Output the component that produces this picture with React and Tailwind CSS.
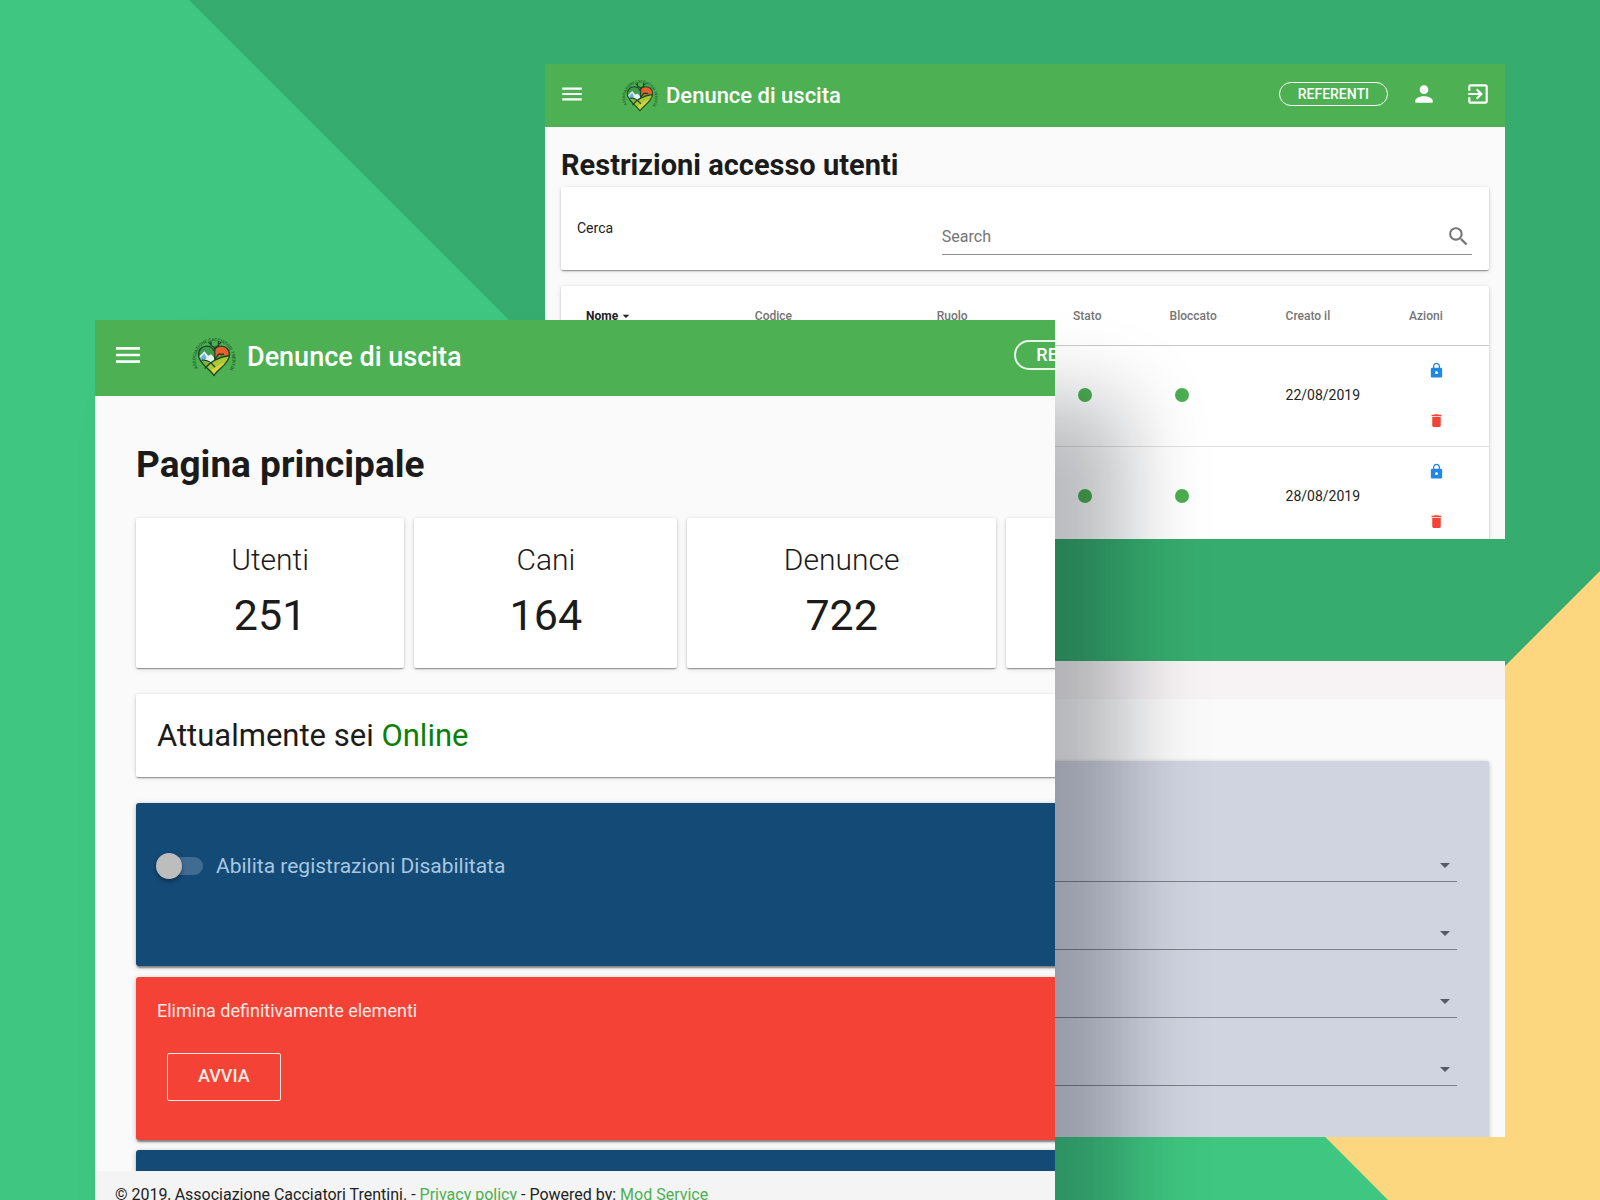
import React from "react";
import {
  MdArrowDropDown,
  MdDelete,
  MdExitToApp,
  MdLock,
  MdMenu,
  MdPerson,
  MdSearch,
} from "react-icons/md";

const CARD =
  "rounded-[2px] bg-white shadow-[0_2px_1px_-1px_rgba(0,0,0,0.25),0_1px_2px_rgba(0,0,0,0.2),0_1px_5px_rgba(0,0,0,0.12)]";
const PANEL =
  "rounded-[3px] shadow-[0_3px_2px_-1px_rgba(0,0,0,0.4),0_1px_5px_rgba(0,0,0,0.25)]";

function Backdrop() {
  return (
    <svg
      className="absolute inset-0 h-full w-full"
      viewBox="0 0 1600 1200"
      preserveAspectRatio="xMidYMid slice"
      aria-hidden="true"
    >
      <rect width="1600" height="1200" fill="#3fc680" />
      <polygon points="189,0 1600,0 1600,1200 1389,1200" fill="#36ad6e" />
      <polygon points="1180,991 1600,571 1600,1200 1388,1200" fill="#fcd77f" />
    </svg>
  );
}

function Logo({ id, className }) {
  return (
    <svg viewBox="0 0 60 60" className={className} role="img" aria-label="Associazione Cacciatori Trentini">
      <defs>
        <path id={`${id}-arc`} d="M8 48A25 25 0 1 1 52 48" />
        <clipPath id={`${id}-heart`}>
          <path d="M30 58C24 49 10 42 9 31C8 23 14 18 20 18C25 18 28 20 30 24C32 20 35 18 40 18C46 18 52 23 51 31C50 42 36 49 30 58Z" />
        </clipPath>
      </defs>
      <text fontSize="6" fontWeight="700" fill="#23662f" fontFamily="Roboto, sans-serif">
        <textPath href={`#${id}-arc`}>ASSOCIAZIONE CACCIATORI TRENTINI</textPath>
      </text>
      <g clipPath={`url(#${id}-heart)`}>
        <rect x="6" y="16" width="48" height="44" fill="#3f9a4c" />
        <path d="M32 18H54V34L42 30L32 34Z" fill="#e8602c" />
        <path d="M6 36L17 25L22 31L26 29L34 38L22 46Z" fill="#e6f2ee" />
        <path d="M10 35L17 28L20 34L16 38Z" fill="#6db4dc" />
        <path d="M6 38C14 34 22 38 30 46L24 56L6 50Z" fill="#7fb83c" />
        <path d="M18 48C26 36 40 30 54 31V60H24Z" fill="#a9c832" />
        <path d="M24 54C30 46 40 40 52 38V60H24Z" fill="#d6d43c" />
        <path d="M27 60C32 52 40 46 50 44V60Z" fill="#9cc038" />
      </g>
      <g fill="none" stroke="#1b4426" strokeWidth="1.8" strokeLinejoin="round" strokeLinecap="round">
        <path d="M30 58C24 49 10 42 9 31C8 23 14 18 20 18C25 18 28 20 30 24C32 20 35 18 40 18C46 18 52 23 51 31C50 42 36 49 30 58Z" />
        <path d="M14 37C22 36 27 41 31 46M18 48C26 38 36 33 50 31" />
        <path d="M31 36V20M31 20L26 17V12M31 20L36 17V12M26 16L23 13M36 16L39 13M31 36L36 29H43" />
      </g>
    </svg>
  );
}

function RestrictionsWindow() {
  const rows = ["22/08/2019", "28/08/2019"];
  const headings = ["Codice", "Ruolo", "Stato", "Bloccato", "Creato il", "Azioni"];
  return (
    <section className="absolute top-16 right-[95px] left-[545px] h-[475px] overflow-hidden bg-[#fafafa]">
      <header className="flex h-[63px] items-center bg-[#4db052] px-[14px] pb-1 text-white">
        <button type="button" aria-label="Menu" className="flex">
          <MdMenu size={26} />
        </button>
        <Logo id="back" className="ml-[37px] size-9" />
        <span className="ml-2 pt-1 text-[22px] leading-7 font-medium">Denunce di uscita</span>
        <button
          type="button"
          className="ml-auto h-6 rounded-full border border-white px-[18px] text-[14px] leading-5 font-medium"
        >
          REFERENTI
        </button>
        <button type="button" aria-label="Profilo" className="ml-[23px] flex">
          <MdPerson size={26} />
        </button>
        <button type="button" aria-label="Esci" className="ml-7 flex">
          <MdExitToApp size={26} />
        </button>
      </header>
      <main className="px-4">
        <h1 className="pt-5 pb-1 text-[29px] leading-9 font-bold text-[#1b1b1b]">Restrizioni accesso utenti</h1>
        <div className={`${CARD} mb-4 grid h-[83px] grid-cols-[364fr_530fr] px-4`}>
          <label htmlFor="search" className="pt-[31px] text-[14px] leading-5 text-[#222]">
            Cerca
          </label>
          <div className="mt-8 mr-px flex h-9 items-center border-b border-[#8d8d8d] pr-px">
            <input
              id="search"
              type="search"
              placeholder="Search"
              className="min-w-0 flex-1 bg-transparent text-[16px] leading-6 outline-none placeholder:text-[#757575]"
            />
            <MdSearch size={25} className="text-[#757575]" />
          </div>
        </div>
        <div className={CARD}>
          <table className="w-full table-fixed border-collapse text-left">
            <colgroup>
              <col className="w-[18.3%]" />
              <col className="w-[19.6%]" />
              <col className="w-[14.7%]" />
              <col className="w-[10.4%]" />
              <col className="w-[12.5%]" />
              <col className="w-[13.3%]" />
              <col className="w-[11.2%]" />
            </colgroup>
            <thead>
              <tr className="h-[59px] border-b border-[#c9c9c9] text-[12px] leading-4 text-[#757575]">
                <th scope="col" className="pt-[2px] pl-[25px] font-bold text-[#222]">
                  <span className="flex items-center">
                    Nome
                    <MdArrowDropDown size={16} />
                  </span>
                </th>
                {headings.map((h) => (
                  <th key={h} scope="col" className="pt-[2px] pl-6 font-medium">
                    {h}
                  </th>
                ))}
              </tr>
            </thead>
            <tbody>
              {rows.map((date) => (
                <tr key={date} className="border-b border-[#e0e0e0] text-[14px] leading-5 text-[#222]">
                  <td />
                  <td />
                  <td />
                  <td className="pb-[2px] pl-[29px]">
                    <span className="block size-[14px] rounded-full bg-[#4caf50]" />
                  </td>
                  <td className="pb-[2px] pl-[29px]">
                    <span className="block size-[14px] rounded-full bg-[#4caf50]" />
                  </td>
                  <td className="pb-[2px] pl-6">{date}</td>
                  <td className="pl-6">
                    <button type="button" aria-label="Blocca" className="flex h-[50px] w-[54px] items-center justify-center text-[#1e88e5]">
                      <MdLock size={17} />
                    </button>
                    <button type="button" aria-label="Elimina" className="flex h-[50px] w-[54px] items-center justify-center text-[#f44336]">
                      <MdDelete size={17} />
                    </button>
                  </td>
                </tr>
              ))}
            </tbody>
          </table>
        </div>
      </main>
    </section>
  );
}

function FormWindow() {
  return (
    <section className="absolute top-[661px] right-[95px] left-[545px] h-[476px] overflow-hidden bg-[#fafafa]">
      <div className="h-[38px] bg-[#f7f3f4]" />
      <form className="mx-4 mt-[62px] h-full rounded-[2px] bg-[#d0d4e0] px-8 pt-[53px] shadow-[0_1px_4px_rgba(0,0,0,0.25)]">
        {["Campo 1", "Campo 2", "Campo 3", "Campo 4"].map((name) => (
          <div key={name} className="grid h-[68px] items-end border-b border-[#7c808b]">
            <select
              aria-label={name}
              className="col-start-1 row-start-1 h-8 w-full appearance-none bg-transparent outline-none"
            />
            <MdArrowDropDown
              size={24}
              className="pointer-events-none col-start-1 row-start-1 mb-1 justify-self-end text-[#555a66]"
            />
          </div>
        ))}
      </form>
    </section>
  );
}

function Stat({ label, value }) {
  return (
    <div className={`${CARD} h-[150px] pt-[22px] text-center text-[#1b1b1b]`}>
      <div className="text-[30px] leading-10 font-light">{label}</div>
      <div className="pt-[7px] text-[43px] leading-[56px]">{value}</div>
    </div>
  );
}

function HomeWindow() {
  return (
    <section className="absolute top-80 right-[545px] -bottom-4 left-[95px] shadow-[70px_80px_76px_rgba(0,10,20,0.28)]">
      <div className="flex h-full flex-col overflow-hidden bg-[#fafafa]">
        <header className="flex h-[76px] w-[125%] shrink-0 items-center bg-[#4db052] px-[17px] pb-[6px] text-white">
          <button type="button" aria-label="Menu" className="flex">
            <MdMenu size={32} />
          </button>
          <Logo id="front" className="ml-12 size-11" />
          <span className="ml-[11px] pt-1 text-[27px] leading-8 font-medium">Denunce di uscita</span>
          <button
            type="button"
            className="ml-auto h-[30px] rounded-full border-2 border-[#e8f5e9] px-5 text-[18px] leading-6 font-medium"
          >
            REFERENTI
          </button>
          <button type="button" aria-label="Profilo" className="ml-7 flex">
            <MdPerson size={32} />
          </button>
          <button type="button" aria-label="Esci" className="ml-9 flex">
            <MdExitToApp size={32} />
          </button>
        </header>
        <main className="w-[125%] flex-1 overflow-hidden px-[41px] pt-[45px]">
          <h1 className="text-[37px] leading-[48px] font-bold text-[#1b1b1b]">Pagina principale</h1>
          <div className="mt-[29px] grid grid-cols-[268fr_263fr_308fr_248fr] gap-[10px]">
            <Stat label="Utenti" value="251" />
            <Stat label="Cani" value="164" />
            <Stat label="Denunce" value="722" />
            <Stat />
          </div>
          <div className={`${CARD} mt-[26px] flex h-[83px] items-center px-[21px] text-[31px] leading-10 text-[#1b1b1b]`}>
            <p>
              Attualmente sei <span className="text-[#0a800a]">Online</span>
            </p>
          </div>
          <div className={`${PANEL} mt-[26px] h-[163px] bg-[#134a76] px-5 pt-[49px]`}>
            <label className="flex items-center gap-[13px] text-[21px] leading-7 text-[#a9c6e0]">
              <input type="checkbox" role="switch" className="peer sr-only" />
              <span className="flex h-[18px] w-[47px] items-center rounded-full bg-linear-to-r from-transparent from-10% to-[#406c93] to-10%">
                <span className="size-[26px] shrink-0 rounded-full bg-[#bdbdbd] shadow-[0_2px_4px_rgba(0,0,0,0.4)]" />
              </span>
              Abilita registrazioni Disabilitata
            </label>
          </div>
          <div className={`${PANEL} mt-[11px] h-[163px] bg-[#f44336] px-[21px] pt-5 text-[#ffe9e3]`}>
            <p className="text-[18px] leading-7">Elimina definitivamente elementi</p>
            <button
              type="button"
              className="mt-7 ml-[10px] h-12 rounded-[2px] border border-[#ffe9e3] px-[30px] pb-[2px] text-[18px] leading-6 font-medium"
            >
              AVVIA
            </button>
          </div>
          <div className={`${PANEL} mt-[10px] h-[163px] bg-[#134a76]`} />
        </main>
        <footer className="flex h-[45px] shrink-0 items-center bg-[#f4f4f4] px-5 pt-[2px] text-[16px] leading-6 text-[#222]">
          <p>
            © 2019, Associazione Cacciatori Trentini. -{" "}
            <a href="#privacy" className="text-[#4caf50]">
              Privacy policy
            </a>{" "}
            - Powered by:{" "}
            <a href="#mod" className="text-[#4caf50]">
              Mod Service
            </a>
          </p>
        </footer>
      </div>
    </section>
  );
}

export default function App() {
  return (
    <div className="relative min-h-screen overflow-hidden font-[Roboto,sans-serif]">
      <Backdrop />
      <RestrictionsWindow />
      <FormWindow />
      <HomeWindow />
    </div>
  );
}
